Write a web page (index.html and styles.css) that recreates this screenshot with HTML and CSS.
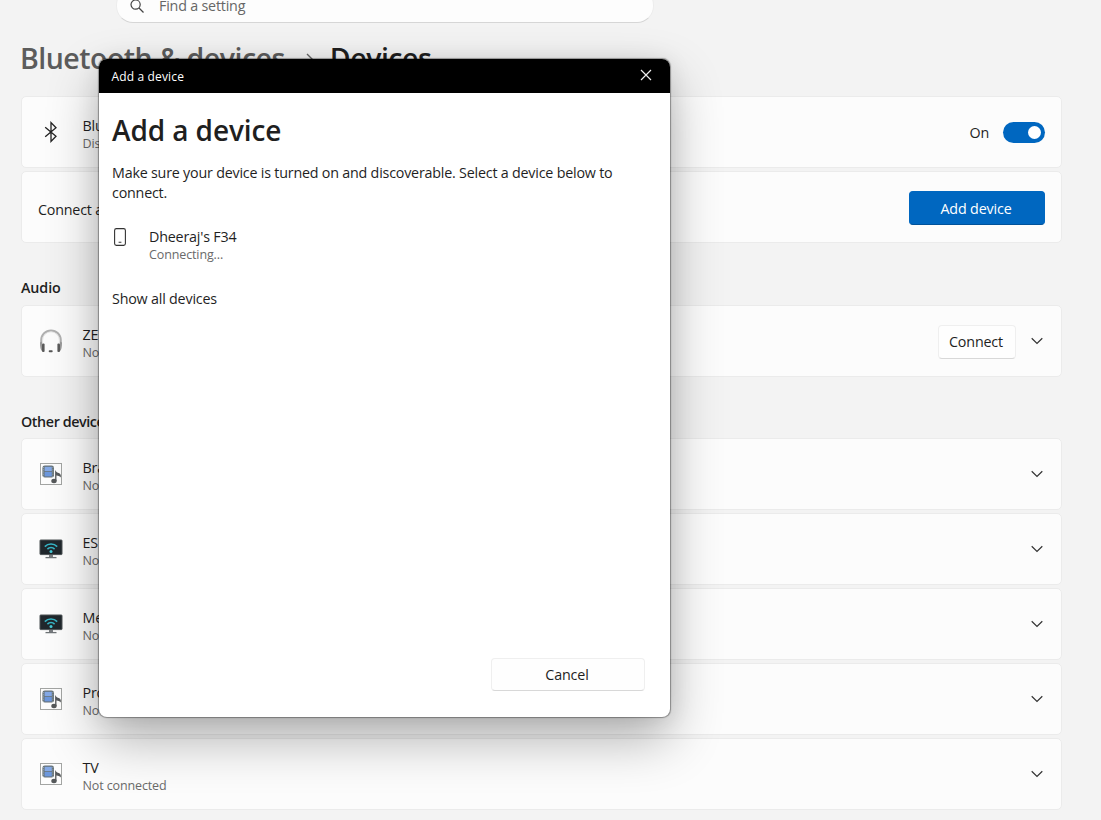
FILE: index.html
```html
<!DOCTYPE html>
<html lang="en">
<head>
    <meta charset="UTF-8">
    <title>Bluetooth & devices</title>
    <link rel="stylesheet" href="styles.css">
</head>
<body>
    <!-- Shared icons -->
    <svg class="sprite" width="0" height="0">
        <symbol id="chevron" viewBox="0 0 12 8">
            <path d="M0.7 1.2 L6 6.4 L11.3 1.2" fill="none" stroke="#333" stroke-width="1.2" />
        </symbol>
        <symbol id="media" viewBox="0 0 22 22">
            <rect x="0.5" y="0.5" width="21" height="21" fill="#fdfdfd" stroke="#a3a5a3" />
            <rect x="2.4" y="2.6" width="11.6" height="12" rx="2.4" fill="#66727a" />
            <rect x="4.6" y="3.8" width="7.2" height="4.4" fill="#84a9e6" />
            <rect x="4.6" y="9" width="7.2" height="4.4" fill="#6c97dc" />
            <path d="M3.5 4v10M12.9 4v10" stroke="#9db0b2" stroke-width="0.8" stroke-dasharray="1.2 1" />
            <ellipse cx="14" cy="18" rx="2.7" ry="2.2" fill="#55585a" />
            <path d="M15.8 18V9.2c1 1.5 4.6 0.8 4.4 3.8c-1-1-2.8-1-4.2-1.3" fill="#5d6665" stroke="#55585a" stroke-width="1.3" />
        </symbol>
        <symbol id="display" viewBox="0 0 24 20">
            <rect x="1" y="1" width="22" height="14.6" rx="0.6" fill="#20272c" stroke="#4d5255" />
            <path d="M10 16h4v2h-4z" fill="#777b7e" />
            <path d="M6.5 18.6h11" stroke="#6f7477" stroke-width="1.3" />
            <path d="M5.8 7.6a8.8 8.8 0 0 1 12.4 0M8.4 10.1a5.2 5.2 0 0 1 7.2 0" fill="none" stroke="#36b5c6" stroke-width="1.6" />
            <circle cx="12" cy="12.4" r="1.5" fill="#45c9d6" />
        </symbol>
    </svg>

    <div class="page">
        <div class="search">
            <svg width="14" height="14" viewBox="0 0 14 14">
                <circle cx="5.6" cy="5.6" r="4.6" fill="none" stroke="#444" stroke-width="1.2" />
                <path d="M9 9l4.5 4.5" stroke="#444" stroke-width="1.3" />
            </svg>
            <span>Find a setting</span>
        </div>

        <h1 class="breadcrumb">
            <span class="parent">Bluetooth &amp; devices</span>
            <svg width="8" height="14" viewBox="0 0 8 14"><path d="M1 1l6 6-6 6" fill="none" stroke="#666" stroke-width="1.4" /></svg>
            <span class="current">Devices</span>
        </h1>

        <div class="cards">
            <div class="card">
                <div class="icon">
                    <svg width="14" height="22" viewBox="0 0 14 22"><path d="M1.2 6.2l10.8 9-5 5.2V1.6l5 5.2-10.8 9" fill="none" stroke="#222" stroke-width="1.3" /></svg>
                </div>
                <div class="info"><div class="name">Blu</div><div class="status">Disc</div></div>
                <span class="on">On</span>
                <div class="toggle"></div>
            </div>
            <div class="card">
                <div class="name label">Connect a</div>
                <button class="primary">Add device</button>
            </div>
        </div>

        <h2 class="audio">Audio</h2>
        <div class="cards">
            <div class="card">
                <div class="icon">
                    <svg width="24" height="24" viewBox="0 0 24 24">
                        <path d="M2.2 15V11.2a9.8 9.8 0 0 1 19.6 0V15" fill="none" stroke="#b0b0b0" stroke-width="2" />
                        <path d="M3.6 14V11.2a8.4 8.4 0 0 1 16.8 0V14" fill="none" stroke="#dedede" stroke-width="0.8" />
                        <path d="M1 13.5l2-1v9.5c-1.5-1-2-4-2-8.5zM23 13.5l-2-1v9.5c1.5-1 2-4 2-8.5z" fill="#999" />
                        <rect x="3" y="14.5" width="2.6" height="8.5" rx="1" fill="#5a5a5a" />
                        <rect x="18.4" y="14.5" width="2.6" height="8.5" rx="1" fill="#5a5a5a" />
                        <rect x="9.7" y="21.3" width="4" height="1.9" rx="0.9" fill="#555" />
                    </svg>
                </div>
                <div class="info"><div class="name">ZE</div><div class="status">No</div></div>
                <button class="connect">Connect</button>
                <svg class="chevron" width="12" height="8"><use href="#chevron" /></svg>
            </div>
        </div>

        <h2 class="other">Other device</h2>
        <div class="cards">
            <div class="card">
                <div class="icon"><svg width="22" height="22"><use href="#media" /></svg></div>
                <div class="info"><div class="name">Bra</div><div class="status">No</div></div>
                <svg class="chevron" width="12" height="8"><use href="#chevron" /></svg>
            </div>
            <div class="card">
                <div class="icon"><svg width="24" height="20"><use href="#display" /></svg></div>
                <div class="info"><div class="name">ES</div><div class="status">No</div></div>
                <svg class="chevron" width="12" height="8"><use href="#chevron" /></svg>
            </div>
            <div class="card">
                <div class="icon"><svg width="24" height="20"><use href="#display" /></svg></div>
                <div class="info"><div class="name">Me</div><div class="status">No</div></div>
                <svg class="chevron" width="12" height="8"><use href="#chevron" /></svg>
            </div>
            <div class="card">
                <div class="icon"><svg width="22" height="22"><use href="#media" /></svg></div>
                <div class="info"><div class="name">Pro</div><div class="status">No</div></div>
                <svg class="chevron" width="12" height="8"><use href="#chevron" /></svg>
            </div>
            <div class="card">
                <div class="icon"><svg width="22" height="22"><use href="#media" /></svg></div>
                <div class="info"><div class="name">TV</div><div class="status">Not connected</div></div>
                <svg class="chevron" width="12" height="8"><use href="#chevron" /></svg>
            </div>
        </div>
    </div>

    <!-- Add a device dialog -->
    <div class="dialog">
        <div class="titlebar">
            <span>Add a device</span>
            <svg width="12" height="12" viewBox="0 0 12 12"><path d="M1 1l10 10M11 1L1 11" stroke="#eee" stroke-width="1.2" /></svg>
        </div>
        <div class="dialog-body">
            <h2 class="dialog-title">Add a device</h2>
            <p class="hint">Make sure your device is turned on and discoverable. Select a device below to connect.</p>
            <div class="found">
                <svg width="12" height="18" viewBox="0 0 12 18">
                    <rect x="0.6" y="0.6" width="10.8" height="16.8" rx="1.8" fill="none" stroke="#333" stroke-width="1.1" />
                    <path d="M4.6 14.2h2.8" stroke="#333" stroke-width="1.1" />
                </svg>
                <div><div class="name">Dheeraj's F34</div><div class="status">Connecting...</div></div>
            </div>
            <div class="show-all">Show all devices</div>
            <button class="cancel">Cancel</button>
        </div>
    </div>
</body>
</html>
```

FILE: styles.css
```css
* {
    box-sizing: border-box;
}

body {
    margin: 0;
    height: 820px;
    overflow: hidden;
    background: #f3f3f3;
    color: #1f1f1f;
    font-family: "Open Sans", "Noto Sans", sans-serif;
    font-size: 14.3px;
    letter-spacing: -0.2px;
}

.sprite {
    display: block;
}

.page {
    width: 1062px;
    height: 820px;
    padding-left: 21px;
    overflow: hidden;
}

.search {
    display: flex;
    align-items: center;
    gap: 15px;
    width: 538px;
    height: 35px;
    margin: -12px 0 0 95px;
    padding-left: 13px;
    background: #fdfdfd;
    border: 1px solid #ececec;
    border-bottom-color: #d6d6d6;
    border-radius: 17px;
    color: #666;
}

.search span {
    line-height: 20px;
}

.breadcrumb {
    display: flex;
    align-items: center;
    height: 40px;
    margin: 15px 0 18px -1px;
    font-size: 28.5px;
    font-weight: 600;
    line-height: 40px;
    letter-spacing: -0.5px;
}

.breadcrumb svg {
    margin: 4px 16px 0 21px;
}

.parent {
    color: #5c5c5c;
}

h2 {
    margin: 0;
    font-size: 14.3px;
    font-weight: 600;
    line-height: 20px;
}

.audio {
    margin: 35px 0 7px;
    letter-spacing: -0.1px;
}

.other {
    margin: 35px 0 6px;
    letter-spacing: -0.4px;
}

.cards {
    display: flex;
    flex-direction: column;
    gap: 3px;
}

.card {
    display: flex;
    align-items: center;
    height: 72px;
    padding: 0 16px;
    background: #fcfcfc;
    border: 1px solid #ebebeb;
    border-radius: 5px;
}

.icon {
    display: flex;
    justify-content: center;
    width: 25px;
    margin-right: 19.5px;
}

.info {
    flex: 1;
    padding-top: 4px;
}

.name {
    line-height: 18px;
}

.status {
    color: #6a6a6a;
    font-size: 12.5px;
    line-height: 17px;
    letter-spacing: -0.12px;
}

.label {
    flex: 1;
    padding-top: 5px;
}

.toggle {
    display: flex;
    justify-content: flex-end;
    align-items: center;
    width: 42px;
    height: 21px;
    margin-left: 14px;
    padding-right: 4px;
    background: #0067c0;
    border-radius: 11px;
}

.toggle::after {
    content: "";
    width: 13px;
    height: 13px;
    background: #fff;
    border-radius: 50%;
}

button {
    padding: 0 2px 0 0;
    font: inherit;
    letter-spacing: -0.15px;
    color: inherit;
    background: #fefefe;
    border: 1px solid #efefef;
    border-bottom-color: #d8d8d8;
    border-radius: 4px;
}

.primary {
    width: 136px;
    height: 34px;
    margin-top: 2px;
    background: #0067c0;
    border: 1px solid #0067c0;
    border-bottom-color: #00529a;
    color: #fff;
}

.connect {
    width: 78px;
    height: 34px;
    margin: 1px 14.5px 0 0;
}

.chevron {
    margin-right: 2.5px;
}

.dialog {
    position: absolute;
    left: 99px;
    top: 59px;
    display: flex;
    flex-direction: column;
    width: 571px;
    height: 658px;
    background: #fff;
    border-radius: 8px;
    overflow: hidden;
    box-shadow: 0 0 1px 0.5px rgba(0, 0, 0, 0.35), 0 22px 52px rgba(0, 0, 0, 0.3), 0 2px 24px rgba(0, 0, 0, 0.09);
}

.titlebar {
    display: flex;
    align-items: center;
    justify-content: space-between;
    height: 34px;
    padding: 0 18px 0 12.5px;
    background: #000;
    color: #fff;
    font-size: 12px;
    letter-spacing: 0.15px;
}

.titlebar svg {
    margin-bottom: 2px;
}

.dialog-body {
    display: flex;
    flex-direction: column;
    flex: 1;
    padding: 17px 25px 26px 13px;
}

.dialog-title {
    font-size: 28px;
    line-height: 40px;
    letter-spacing: -0.1px;
}

.hint {
    margin: 13px 0 0;
    line-height: 20px;
    letter-spacing: -0.21px;
}

.found {
    display: flex;
    gap: 23px;
    margin-top: 25px;
    padding-left: 2px;
}

.show-all {
    margin-top: 26px;
    line-height: 20px;
}

.cancel {
    align-self: flex-end;
    width: 154px;
    height: 33px;
    margin-top: auto;
}
```
